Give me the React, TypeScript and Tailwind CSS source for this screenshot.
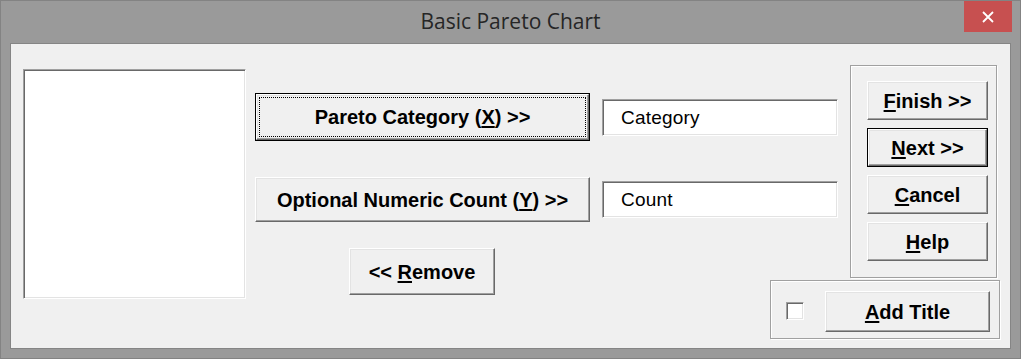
import type { ReactNode } from "react";

const sans = "font-['Liberation_Sans',Arial,sans-serif]";

function Bevel({ children, className = "" }: { children: ReactNode; className?: string }) {
  return (
    <div
      className={`flex items-center justify-center border border-t-white border-l-white border-r-[#696969] border-b-[#696969] bg-[#f0f0f0] shadow-[inset_-1px_-1px_0_#a0a0a0,inset_1px_1px_0_#e3e3e3] ${className}`}
    >
      {children}
    </div>
  );
}

function Button({
  children,
  className = "",
  isDefault = false,
  focused = false,
}: {
  children: ReactNode;
  className?: string;
  isDefault?: boolean;
  focused?: boolean;
}) {
  const label = (
    <span className={`${sans} text-[20px] font-bold leading-none text-black`}>
      {children}
    </span>
  );
  if (!isDefault) return <Bevel className={className}>{label}</Bevel>;
  return (
    <div className={`flex border border-black ${className}`}>
      <Bevel className="flex-1 p-[2px]">
        {focused ? (
          <div className="flex h-full w-full items-center justify-center border border-dotted border-black">
            {label}
          </div>
        ) : (
          label
        )}
      </Bevel>
    </div>
  );
}

function Sunken({ children, className = "" }: { children?: ReactNode; className?: string }) {
  return (
    <div
      className={`border border-t-[#a0a0a0] border-l-[#a0a0a0] border-r-white border-b-white bg-white shadow-[inset_1px_1px_0_#696969,inset_-1px_-1px_0_#e3e3e3] ${className}`}
    >
      {children}
    </div>
  );
}

function Field({ value }: { value: string }) {
  return (
    <Sunken className="flex h-[37px] w-[236px] items-center pl-[18px]">
      <span className={`${sans} text-[19px] leading-none tracking-[0.2px] text-black`}>{value}</span>
    </Sunken>
  );
}

const etched = "border border-[#a0a0a0] shadow-[inset_1px_1px_0_#fff,1px_1px_0_#fff]";

export default function App() {
  return (
    <div className="flex h-[359px] w-[1021px] flex-col border border-[#838383] bg-[#9a9a9a]">
      <div className="relative flex h-[42px] shrink-0 items-center justify-center">
        <span className="font-['Open_Sans',sans-serif] text-[21px] text-[#262626]">
          Basic Pareto Chart
        </span>
        <div className="absolute right-[8px] top-0 flex h-[31px] w-[48px] items-center justify-center bg-[#c75050]">
          <svg width="12" height="12" viewBox="0 0 12 12">
            <path d="M1 1 11 11M11 1 1 11" stroke="white" strokeWidth="1.8" />
          </svg>
        </div>
      </div>

      <div className="ml-[9px] flex h-[306px] w-[1001px] items-start border border-[#858585] bg-[#f0f0f0]">
        <Sunken className="ml-[12px] mt-[25px] h-[230px] w-[223px] shrink-0" />

        <div className="ml-[9px] mt-[49px] flex shrink-0 flex-col">
          <div className="flex items-center gap-[12px]">
            <Button isDefault focused className="h-[48px] w-[335px]">
              Pareto Category (<u className="underline-offset-2">X</u>) &gt;&gt;
            </Button>
            <Field value="Category" />
          </div>
          <div className="mt-[36px] flex items-center gap-[12px]">
            <Button className="h-[45px] w-[335px]">
              Optional Numeric Count (<u className="underline-offset-2">Y</u>) &gt;&gt;
            </Button>
            <Field value="Count" />
          </div>
          <Button className="ml-[94px] mt-[26px] h-[47px] w-[146px]">
            &lt;&lt; <u className="underline-offset-2">R</u>emove
          </Button>
        </div>

        <div className="ml-[-68px] mt-[21px] flex w-[230px] shrink-0 flex-col items-end">
          <div className={`mr-[3px] flex h-[213px] w-[147px] flex-col gap-[8px] pl-[16px] pt-[15px] ${etched}`}>
            <Button className="h-[39px] w-[121px]">
              <u className="underline-offset-2">F</u>inish &gt;&gt;
            </Button>
            <Button isDefault className="h-[39px] w-[121px]">
              <u className="underline-offset-2">N</u>ext &gt;&gt;
            </Button>
            <Button className="h-[39px] w-[121px]">
              <u className="underline-offset-2">C</u>ancel
            </Button>
            <Button className="h-[39px] w-[121px]">
              <u className="underline-offset-2">H</u>elp
            </Button>
          </div>
          <div className={`mt-[2px] flex h-[59px] w-[230px] items-start ${etched}`}>
            <Sunken className="ml-[15px] mt-[21px] h-[18px] w-[18px] shrink-0" />
            <Button className="ml-[21px] mt-[10px] h-[41px] w-[165px]">
              <u className="underline-offset-2">A</u>dd Title
            </Button>
          </div>
        </div>
      </div>
    </div>
  );
}
